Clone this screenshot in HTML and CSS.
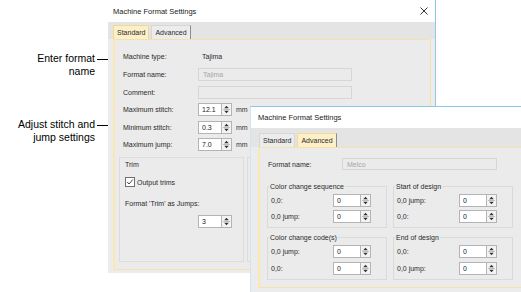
FILE: index.html
```html
<!DOCTYPE html>
<html lang="en">
<head>
    <meta charset="UTF-8">
    <title>Machine Format Settings</title>
    <link rel="stylesheet" href="styles.css">
</head>
<body>
    <div class="canvas">
        <div class="callout callout-name">Enter format<br>name</div>
        <svg class="arrow arrow-name" width="22" height="7" viewBox="0 0 22 7">
            <path d="M0 3.5h18" stroke="#000" stroke-width="1"/>
            <path d="M17 1.5l4 2l-4 2z" fill="#000"/>
        </svg>
        <div class="callout callout-stitch">Adjust stitch and<br>jump settings</div>
        <svg class="arrow arrow-stitch" width="22" height="7" viewBox="0 0 22 7">
            <path d="M0 3.5h18" stroke="#000" stroke-width="1"/>
            <path d="M17 1.5l4 2l-4 2z" fill="#000"/>
        </svg>

        <!-- Standard tab window -->
        <div class="dialog dialog-standard">
            <div class="titlebar">
                <span>Machine Format Settings</span>
                <svg class="close" width="8" height="8" viewBox="0 0 8 8">
                    <path d="M0.5 0.5l7 7M7.5 0.5l-7 7" stroke="#333" stroke-width="1"/>
                </svg>
            </div>
            <div class="tabstrip">
                <div class="tab active">Standard</div>
                <div class="tab last">Advanced</div>
            </div>
            <div class="page">
                <div class="form">
                    <div class="label">Machine type:</div>
                    <div class="value">Tajima</div>

                    <div class="label">Format name:</div>
                    <div><input class="textbox" value="Tajima" disabled></div>

                    <div class="label">Comment:</div>
                    <div><input class="textbox" value="" disabled></div>

                    <div class="label">Maximum stitch:</div>
                    <div class="spin-row">
                        <div class="spin"><input value="12.1"><span class="spin-btn"></span></div>
                        <span class="unit">mm</span>
                    </div>

                    <div class="label">Minimum stitch:</div>
                    <div class="spin-row">
                        <div class="spin"><input value="0.3"><span class="spin-btn"></span></div>
                        <span class="unit">mm</span>
                    </div>

                    <div class="label">Maximum jump:</div>
                    <div class="spin-row">
                        <div class="spin"><input value="7.0"><span class="spin-btn"></span></div>
                        <span class="unit">mm</span>
                    </div>
                </div>

                <div class="panels">
                    <div class="panel trim">
                        <div class="panel-title">Trim</div>
                        <div class="check-row">
                            <svg width="10" height="10" viewBox="0 0 10 10">
                                <rect x="0.5" y="0.5" width="9" height="9" fill="#fff" stroke="#707070"/>
                                <path d="M2.2 5l1.8 2l3.8-4.5" fill="none" stroke="#333" stroke-width="0.9"/>
                            </svg>
                            <span>Output trims</span>
                        </div>
                        <div class="trim-label">Format 'Trim' as Jumps:</div>
                        <div class="spin trim-spin"><input value="3"><span class="spin-btn"></span></div>
                    </div>
                    <div class="panel hidden-panel"></div>
                </div>
            </div>
        </div>

        <!-- Advanced tab window -->
        <div class="dialog dialog-advanced">
            <div class="titlebar">
                <span>Machine Format Settings</span>
            </div>
            <div class="tabstrip">
                <div class="tab">Standard</div>
                <div class="tab active last">Advanced</div>
            </div>
            <div class="page">
                <div class="form form-adv">
                    <div class="label">Format name:</div>
                    <div><input class="textbox" value="Melco" disabled></div>
                </div>

                <div class="groups">
                    <fieldset class="group">
                        <legend>Color change sequence</legend>
                        <div class="group-row">
                            <span>0,0:</span>
                            <div class="spin wide"><input value="0"><span class="spin-btn"></span></div>
                        </div>
                        <div class="group-row">
                            <span>0,0 jump:</span>
                            <div class="spin wide"><input value="0"><span class="spin-btn"></span></div>
                        </div>
                    </fieldset>
                    <fieldset class="group">
                        <legend>Start of design</legend>
                        <div class="group-row">
                            <span>0,0 jump:</span>
                            <div class="spin wide"><input value="0"><span class="spin-btn"></span></div>
                        </div>
                        <div class="group-row">
                            <span>0,0:</span>
                            <div class="spin wide"><input value="0"><span class="spin-btn"></span></div>
                        </div>
                    </fieldset>
                    <fieldset class="group">
                        <legend>Color change code(s)</legend>
                        <div class="group-row">
                            <span>0,0 jump:</span>
                            <div class="spin wide"><input value="0"><span class="spin-btn"></span></div>
                        </div>
                        <div class="group-row">
                            <span>0,0:</span>
                            <div class="spin wide"><input value="0"><span class="spin-btn"></span></div>
                        </div>
                    </fieldset>
                    <fieldset class="group">
                        <legend>End of design</legend>
                        <div class="group-row">
                            <span>0,0:</span>
                            <div class="spin wide"><input value="0"><span class="spin-btn"></span></div>
                        </div>
                        <div class="group-row">
                            <span>0,0 jump:</span>
                            <div class="spin wide"><input value="0"><span class="spin-btn"></span></div>
                        </div>
                    </fieldset>
                </div>
            </div>
        </div>
    </div>
</body>
</html>
```

FILE: styles.css
```css
body {
    margin: 0;
    background-color: #fff;
    font-family: "Liberation Sans", Arial, sans-serif;
}

.canvas {
    position: relative;
    width: 521px;
    height: 292px;
    overflow: hidden;
    background-color: #fff;
}

/* callouts on the left */
.callout {
    position: absolute;
    left: 0;
    width: 95px;
    text-align: right;
    font-size: 10.5px;
    line-height: 13px;
    color: #000;
}

.callout-name {
    top: 52px;
}

.callout-stitch {
    top: 118px;
}

.arrow {
    position: absolute;
    left: 97px;
}

.arrow-name {
    top: 56px;
}

.arrow-stitch {
    top: 122px;
}

/* windows */
.dialog {
    position: absolute;
    box-sizing: border-box;
    background-color: #ececec;
    font-size: 7px;
    color: #2a2a2a;
    overflow: hidden;
}

.dialog-standard {
    left: 108px;
    top: 0;
    width: 328px;
    height: 273px;
    border-right: 1px solid #8cc8e4;
}

.dialog-advanced {
    left: 250px;
    top: 106px;
    width: 290px;
    height: 190px;
    border-top: 1px solid #8cc8e4;
    border-left: 1px solid #cfe6f1;
}

.titlebar {
    height: 22px;
    background-color: #fff;
    display: flex;
    align-items: center;
    justify-content: space-between;
    padding: 0 7px 0 5px;
    font-size: 7.5px;
    color: #1a1a1a;
}

.dialog-advanced .titlebar {
    height: 21px;
    padding-left: 7px;
}

.tabstrip {
    height: 17px;
    display: flex;
    align-items: flex-end;
    gap: 2px;
    padding-left: 5px;
    background-color: #e4e4e4;
}

.dialog-advanced .tabstrip {
    height: 19px;
    padding-left: 8px;
}

.tab {
    height: 14px;
    box-sizing: border-box;
    display: flex;
    align-items: center;
    padding: 0 3px;
    border: 1px solid #d6d6d6;
    border-bottom: none;
    background-color: #ececec;
}

.tab.active {
    background-color: #fdf0c9;
    border-color: #f1d992;
}

.tab.last {
    border-right: 1px solid #8d8d8d;
}

.page {
    box-sizing: border-box;
    margin: 0 4px 0 5px;
    height: 231px;
    border: 1px solid #f5e2ab;
    border-left: 2px solid #fae7b2;
    background-color: #ebebeb;
}

.dialog-advanced .page {
    margin: 0 0 0 7px;
    height: 141px;
}

/* form rows */
.form {
    display: grid;
    grid-template-columns: 75px 1fr;
    grid-auto-rows: 17.6px;
    align-items: center;
    padding: 8.2px 0 0 8px;
}

.form-adv {
    grid-template-columns: 74px 1fr;
    grid-auto-rows: 16px;
    padding-top: 8px;
}

.value {
    padding-left: 4px;
}

input {
    font: inherit;
    color: #222;
    margin: 0;
    outline: none;
}

.textbox {
    display: block;
    box-sizing: border-box;
    width: 154px;
    height: 13px;
    padding: 0 0 0 4px;
    border: 1px solid #d6d6d6;
    background-color: #ebebeb;
    color: #a6a6a6;
}

.form-adv .textbox {
    width: 155px;
    height: 12px;
}

.spin-row {
    display: flex;
    align-items: center;
    gap: 4px;
}

.spin {
    display: flex;
    height: 13px;
}

.spin input {
    box-sizing: border-box;
    width: 23px;
    height: 13px;
    padding: 0 0 0 3px;
    border: 1px solid #b4b4b4;
    border-right: none;
    background-color: #fff;
}

.spin.wide input {
    width: 27px;
}

.spin-btn {
    box-sizing: border-box;
    width: 11px;
    height: 13px;
    border: 1px solid #b4b4b4;
    background: #f3f3f3 url("data:image/svg+xml,%3Csvg xmlns='http://www.w3.org/2000/svg' viewBox='0 0 9 11'%3E%3Cpath d='M2.2 4.2h4.6L4.5 1.8z M2.2 6.8h4.6L4.5 9.2z' fill='%23333'/%3E%3Cpath d='M1 5.5h7' stroke='%23b0b0b0' stroke-width='0.8'/%3E%3C/svg%3E") center / 9px 11px no-repeat;
}

.unit {
    color: #333;
}

/* trim area */
.panels {
    display: flex;
    gap: 3px;
    margin-top: 3.2px;
    padding-left: 4px;
}

.panel {
    box-sizing: border-box;
    height: 105px;
    border: 1px solid #dcdcdc;
}

.trim {
    width: 125px;
    display: flex;
    flex-direction: column;
    align-items: flex-start;
    padding: 1px 0 0 5px;
}

.panel-title {
    line-height: 11px;
}

.check-row {
    display: flex;
    align-items: center;
    gap: 2px;
    margin-top: 7px;
    height: 11px;
}

.check-row svg {
    display: block;
}

.trim-label {
    margin-top: 10px;
    line-height: 11px;
}

.trim-spin {
    margin: 6px 0 0 73px;
}

.hidden-panel {
    width: 90px;
}

/* advanced groups */
.groups {
    display: grid;
    grid-template-columns: 120px 120px;
    column-gap: 6px;
    row-gap: 5px;
    margin-top: 9.5px;
    padding-left: 7px;
}

.group {
    margin: 0;
    min-width: 0;
    padding: 1.5px 3px 2px;
    border: 1px solid #dadada;
}

.group legend {
    padding: 0 1px;
    margin-left: -2px;
    line-height: 9px;
    font-size: 7px;
}

.group-row {
    display: grid;
    grid-template-columns: 62px auto;
    align-items: center;
    height: 16.5px;
}
```
